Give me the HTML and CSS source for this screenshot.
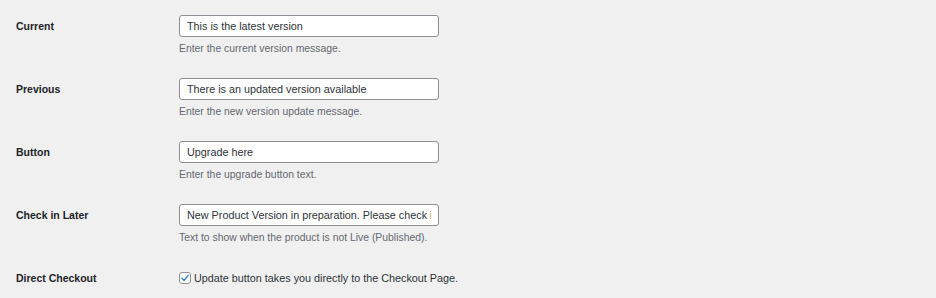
FILE: index.html
```html
<!DOCTYPE html>
<html lang="en">
<head>
  <meta charset="UTF-8">
  <title>Version settings</title>
  <link rel="stylesheet" href="styles.css">
</head>
<body>

  <div class="form-table">
    <div class="row">
      <label class="label" for="current">Current</label>
      <div class="field">
        <input type="text" id="current" class="regular-text" value="This is the latest version">
        <p class="description">Enter the current version message.</p>
      </div>
    </div>

    <div class="row">
      <label class="label" for="previous">Previous</label>
      <div class="field">
        <input type="text" id="previous" class="regular-text" value="There is an updated version available">
        <p class="description">Enter the new version update message.</p>
      </div>
    </div>

    <div class="row">
      <label class="label" for="button">Button</label>
      <div class="field">
        <input type="text" id="button" class="regular-text" value="Upgrade here">
        <p class="description">Enter the upgrade button text.</p>
      </div>
    </div>

    <div class="row">
      <label class="label" for="later">Check in Later</label>
      <div class="field">
        <input type="text" id="later" class="regular-text" value="New Product Version in preparation. Please check in later.">
        <p class="description">Text to show when the product is not Live (Published).</p>
      </div>
    </div>

    <div class="row last">
      <label class="label" for="direct">Direct Checkout</label>
      <div class="field">
        <label class="check">
          <input type="checkbox" id="direct" checked>
          <span class="check-box">
            <svg viewBox="0 0 12 12" width="10" height="10"><path d="M2.2 6.2 L4.9 9 L9.8 2.8" fill="none" stroke="#3582c4" stroke-width="1.6" stroke-linecap="round" stroke-linejoin="round"/></svg>
          </span>
          Update button takes you directly to the Checkout Page.
        </label>
      </div>
    </div>
  </div>

</body>
</html>
```

FILE: styles.css
```css
body {
  margin: 0;
  background-color: #f0f0f1;
  font-family: "Liberation Sans", Arial, sans-serif;
  font-size: 11px;
  color: #1d2327;
}

.form-table {
  padding: 15px 0 0 16px;
}

.row {
  display: grid;
  grid-template-columns: 163px 1fr;
  height: 63px;
}

.row.last {
  height: auto;
}

.label {
  font-weight: bold;
  font-size: 10.5px;
  line-height: 22px;
  color: #1d2327;
}

.regular-text {
  box-sizing: border-box;
  width: 260px;
  height: 22px;
  margin: 0;
  padding: 0 7px;
  border: 1px solid #8c8f94;
  border-radius: 3px;
  background-color: #fff;
  font-family: inherit;
  font-size: 10.8px;
  color: #2c3338;
}

.description {
  margin: 5px 0 0;
  color: #646970;
  font-size: 10.4px;
  line-height: 14px;
}

.check {
  display: flex;
  align-items: center;
  gap: 3px;
  height: 22px;
  font-size: 10.8px;
  color: #2c3338;
}

.check input {
  display: none;
}

.check-box {
  box-sizing: border-box;
  width: 12px;
  height: 12px;
  border: 1px solid #8c8f94;
  border-radius: 3px;
  background-color: #fff;
  display: flex;
  align-items: center;
  justify-content: center;
}
```
